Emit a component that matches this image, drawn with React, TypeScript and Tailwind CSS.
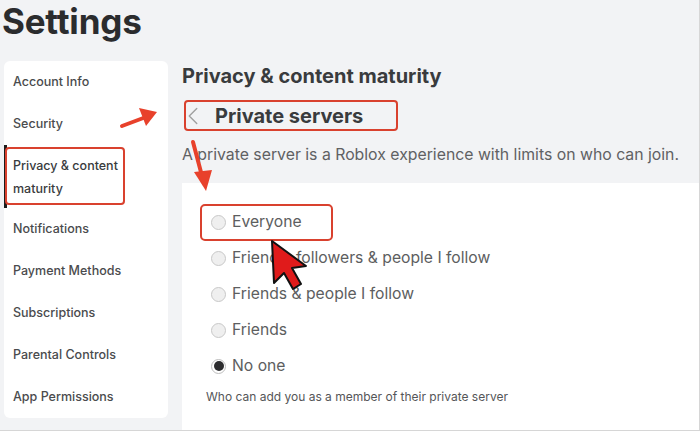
import { ChevronLeft } from 'lucide-react';

const navItems = [
  'Account Info',
  'Security',
  'Privacy & content maturity',
  'Notifications',
  'Payment Methods',
  'Subscriptions',
  'Parental Controls',
  'App Permissions',
];

const options = [
  { label: 'Everyone', checked: false },
  { label: 'Friends, followers & people I follow', checked: false },
  { label: 'Friends & people I follow', checked: false },
  { label: 'Friends', checked: false },
  { label: 'No one', checked: true },
];

function Radio({ checked }: { checked: boolean }) {
  if (checked) {
    return (
      <span className="flex h-[15px] w-[15px] items-center justify-center rounded-full border border-[#bdbdbd] bg-white">
        <span className="h-[10px] w-[10px] rounded-full bg-[#2c2c2e]" />
      </span>
    );
  }
  return <span className="h-[15px] w-[15px] rounded-full border border-[#c8c8c8] bg-[#efefef]" />;
}

function Annotations() {
  return (
    <svg className="pointer-events-none absolute inset-0" width="700" height="431" viewBox="0 0 700 431">
      {/* arrow to the Private servers header */}
      <line x1="122" y1="126" x2="146" y2="117" stroke="#e8412b" strokeWidth="4" strokeLinecap="round" />
      <polygon points="157,112 139,108 146,126" fill="#e8412b" />
      {/* arrow down to the option */}
      <line x1="193" y1="142" x2="202" y2="176" stroke="#e8412b" strokeWidth="4" strokeLinecap="round" />
      <polygon points="206,191 194,172 212,170" fill="#e8412b" />
      {/* cursor */}
      <polygon
        points="272,241 274,283 284,273 293,289 301,284 292,268 306,266"
        fill="#e01b1b"
        stroke="#111"
        strokeWidth="2"
        strokeLinejoin="round"
      />
    </svg>
  );
}

export default function App() {
  return (
    <div
      className="relative h-[431px] w-[700px] overflow-hidden border-r border-b border-[#d6d6d6] bg-[#f2f3f5] text-[#393b3d]"
      style={{ fontFamily: 'Inter, "Noto Sans", sans-serif' }}
    >
      <h1 className="pl-[2px] pt-[1px] text-[35px] font-bold leading-[40px] tracking-[-0.2px] text-[#2b2c2e]">Settings</h1>

      <div className="mt-[20px] flex gap-[14px]">
        <nav className="ml-[4px] w-[164px] shrink-0 self-start rounded-md bg-white">
          {navItems.map((item) => {
            const active = item.startsWith('Privacy');
            return (
              <div
                key={item}
                className={
                  active
                    ? 'relative flex h-[63px] items-center pl-[9px] pr-4 text-[12.5px] font-medium leading-[23px] text-[#393b3d]'
                    : 'flex h-[42px] items-center pl-[9px] text-[12.5px] font-medium text-[#4a4b4d]'
                }
              >
                {active && <span className="absolute left-0 top-0 h-full w-[3px] bg-[#1c1c1c]" />}
                {active && (
                  <span className="absolute left-[1px] top-[2px] h-[58px] w-[120px] rounded-[4px] border-2 border-[#d9412e]" />
                )}
                {active ? (
                  <span>
                    Privacy &amp; content
                    <br />
                    maturity
                  </span>
                ) : (
                  item
                )}
              </div>
            );
          })}
        </nav>

        <main className="flex-1">
          <h2 className="mt-[1px] text-[20px] font-bold leading-[28px] text-[#393b3d]">
            Privacy &amp; content maturity
          </h2>
          <div className="mt-[10px] ml-[2px] flex h-[31px] w-[214px] items-center rounded-[4px] border-2 border-[#d9412e]">
            <ChevronLeft className="-ml-[8px] h-[30px] w-[30px] text-[#a0a0a0]" strokeWidth={1.1} />
            <span className="ml-[7px] text-[20px] font-bold text-[#393b3d]">Private servers</span>
          </div>
          <p className="mt-[13px] text-[15.8px] leading-[22px] text-[#606163]">
            A private server is a Roblox experience with limits on who can join.
          </p>

          <div className="mt-[17px] h-[260px] bg-white pl-[24px] pt-[21px]">
            <div className="flex flex-col">
              {options.map((o, i) => (
                <div key={o.label} className="relative flex h-[36px] items-center gap-[6px] pl-[5px]">
                  {i === 0 && (
                    <span className="absolute -left-[6px] top-[0px] h-[37px] w-[133px] rounded-[5px] border-2 border-[#d9412e]" />
                  )}
                  <Radio checked={o.checked} />
                  <span className="text-[15.7px] text-[#5d5e60]">{o.label}</span>
                </div>
              ))}
            </div>
            <p className="mt-[5px] text-[12px] leading-[16px] text-[#555658]">
              Who can add you as a member of their private server
            </p>
          </div>
        </main>
      </div>

      <Annotations />
    </div>
  );
}
